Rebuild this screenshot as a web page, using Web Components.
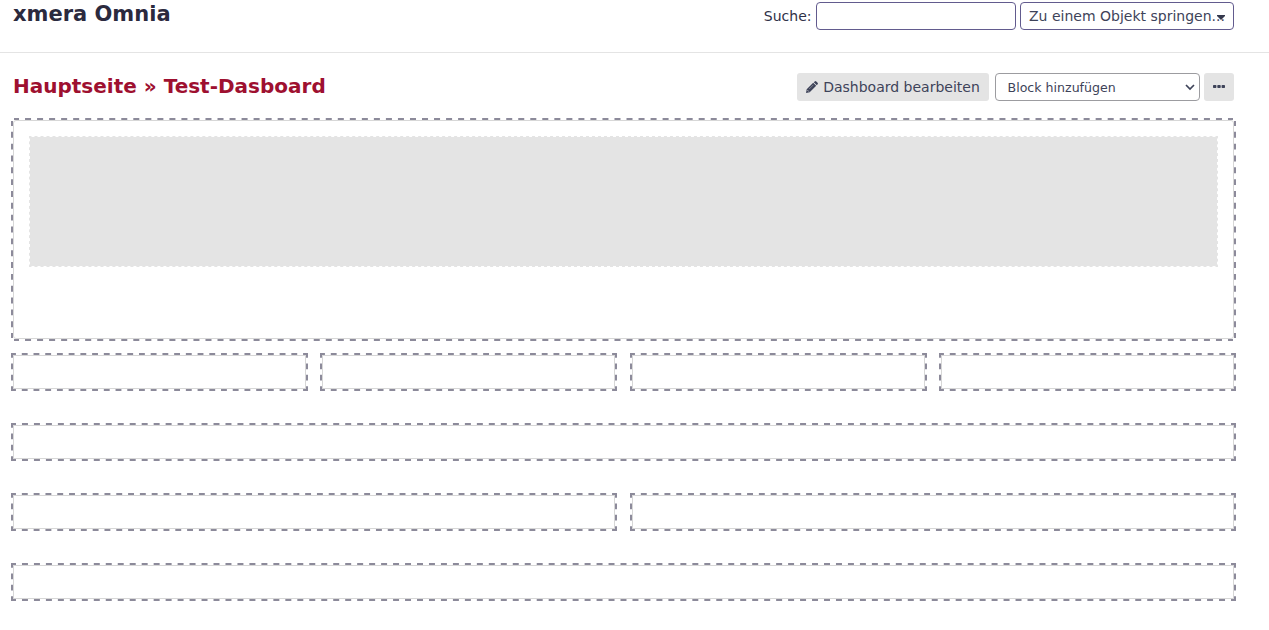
<!DOCTYPE html>
<html lang="de"><head><meta charset="utf-8"><title>xmera Omnia</title>
<style>body{margin:0;background:#fff;font-family:"DejaVu Sans",sans-serif;font-size:14px;color:#3e4359;height:630px;overflow:hidden}</style></head>
<body><omnia-app></omnia-app>
<script>
const define=(name,html)=>customElements.define(name,class extends HTMLElement{
  constructor(){super();this.attachShadow({mode:'open'}).innerHTML=html;}
});
// A box framed by evenly distributed dashes, three stroke widths long each.
const defineDashed=(name,w,color,grow,html)=>customElements.define(name,class extends HTMLElement{
  constructor(){
    super();
    this.attachShadow({mode:'open'}).innerHTML=html+`<style>:host{position:relative}.frame{position:absolute;pointer-events:none;overflow:visible;left:${-grow}px;top:${-grow}px}</style><svg class="frame"></svg>`;
    new ResizeObserver(()=>this.drawFrame()).observe(this);
  }
  drawFrame(){
    const svg=this.shadowRoot.querySelector('.frame');
    const inset=parseFloat(getComputedStyle(this).borderTopWidth);
    const W=Math.round(this.offsetWidth+2*(grow-inset)),H=Math.round(this.offsetHeight+2*(grow-inset));
    svg.setAttribute('width',W);svg.setAttribute('height',H);
    const round=this.hasAttribute('large'),h=w/2;
    const side=(len,x,y,vertical)=>{
      const l=len-2*w;
      const end=round?w+1:0;
      const period=round?l/(Math.round(l/(6*w)-.5)+.5):l/Math.ceil(l/(6*w));
      const offset=round?1:period/4-w;
      const d=vertical?`M${x} ${end}V${len-end}`:`M${end} ${y}H${len-end}`;
      return `<path d="${d}" stroke-dasharray="${period/2}" stroke-dashoffset="${offset}"/>`;
    };
    svg.innerHTML=`<g fill="none" stroke="${color}" stroke-width="${w}">${side(W,0,h)}${side(W,0,H-h)}${side(H,h,0,true)}${side(H,W-h,0,true)}</g>`;
  }
});
define('omnia-header',`<style>
:host{display:flex;box-sizing:border-box;height:53px;border-bottom:1px solid #e4e4e4;padding:2px 35px 0 13px;align-items:flex-start}
h1{margin:0;flex:1;font-size:21px;line-height:25px;color:#2b2a3e}
label{line-height:28px;margin-right:4.5px;color:#2f3147}
input,.jump{box-sizing:border-box;height:28px;border:1px solid #625b8e;border-radius:4px;background:#fff}
input{width:200px;margin:0 4px 0 0;outline:0;font:inherit}
.jump{width:214px;padding:0 8px;line-height:26px;white-space:nowrap;position:relative}
.jump svg{position:absolute;right:8px;top:12px}
</style><h1>xmera Omnia</h1><label>Suche:</label><input aria-label="Suche"><div class="jump">Zu einem Objekt springen...<svg width="8" height="5"><path d="M0 0H8V1L4 5L0 1Z" fill="#34384d"/></svg></div>`);
define('omnia-button',`<style>
:host{display:flex;box-sizing:border-box;height:28px;border-radius:3px;background:#e4e4e4;align-items:center;justify-content:center;white-space:nowrap}
</style><slot></slot>`);
define('omnia-select',`<style>
:host{display:flex;box-sizing:border-box;width:205px;height:28px;border:1px solid #9c9ca0;border-radius:4px;padding:0 4px 0 11.5px;align-items:center;justify-content:space-between;font-size:12.6px;background:#fff}
</style><slot></slot><svg width="10" height="7"><path d="M1 1L5 5L9 1" fill="none" stroke="#3e4359" stroke-width="1.7"/></svg>`);
define('omnia-toolbar',`<style>
:host{display:flex;padding:20px 35px 0 13px;height:47px;align-items:flex-start}
h2{margin:0;flex:1;font-size:20px;line-height:27px;color:#9e1030}
.edit{width:192px}.edit svg{margin-right:5px}
omnia-select{margin:0 4px 0 6px}.more{width:30px}
</style><h2>Hauptseite » Test-Dasboard</h2>
<omnia-button class="edit"><svg width="12" height="12" viewBox="0 0 12 12"><path d="M0 12L.7 8.3L7.2 1.8L10.2 4.8L3.7 11.3ZM7.8 1.2L8.7.4Q9.5-.3 10.3.4L11.6 1.7Q12.3 2.5 11.6 3.3L10.8 4.2Z" fill="#3e4359"/><path d="M1.5 9.2L2.8 10.5" stroke="#e4e4e4" stroke-width=".8"/><path d="M3.2 8L7.3 3.9" stroke="#e4e4e4" stroke-width=".4"/></svg>Dashboard bearbeiten</omnia-button>
<omnia-select>Block hinzufügen</omnia-select>
<omnia-button class="more"><svg width="12" height="4"><g fill="#3e4359"><rect width="3.4" height="3" rx=".7"/><rect x="4.3" width="3.4" height="3" rx=".7"/><rect x="8.6" width="3.4" height="3" rx=".7"/></g></svg></omnia-button>`);
defineDashed('block-zone',2,'#8c8a9a',3,`<style>
:host{display:block;box-sizing:border-box;flex:1 1 0;height:34px;border:1px solid #d7d7d7}
:host([large]){height:219px;padding:15px;border-radius:3px}
</style><slot></slot>`);
defineDashed('drop-placeholder',1,'#e4e4e4',1,`<style>
:host{display:block;box-sizing:border-box;height:131px;border:1px solid transparent;background:#e4e4e4 padding-box}
</style>`);
define('zone-row',`<style>:host{display:flex;gap:16px}</style><slot></slot>`);
define('omnia-dashboard',`<style>
:host{display:flex;flex-direction:column;gap:36px;padding:0 35px 0 13px}
.first{margin-bottom:-20px}
.middle{margin-left:1px}
</style><zone-row class="first"><block-zone large><drop-placeholder></drop-placeholder></block-zone></zone-row>
<zone-row><block-zone></block-zone><block-zone></block-zone><block-zone class="middle"></block-zone><block-zone></block-zone></zone-row>
<zone-row><block-zone></block-zone></zone-row>
<zone-row><block-zone></block-zone><block-zone class="middle"></block-zone></zone-row>
<zone-row><block-zone></block-zone></zone-row>`);
define('omnia-app',`<style>:host{display:block}</style><omnia-header></omnia-header><omnia-toolbar></omnia-toolbar><omnia-dashboard></omnia-dashboard>`);
</script></body></html>
